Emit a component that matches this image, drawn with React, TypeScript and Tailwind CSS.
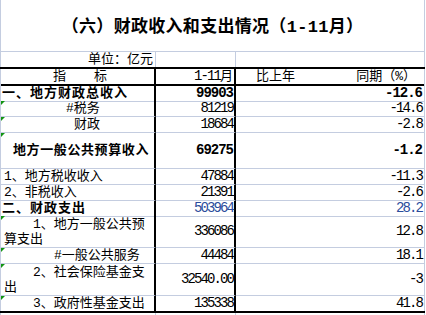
import React from "react";

type RowData = {
  h: string;
  label: React.ReactNode;
  labelCls: string;
  v1: string;
  v2: string;
  bold?: boolean;
  blue?: boolean;
  tri?: boolean;
  center?: boolean;
  wrap?: boolean;
  last?: boolean;
};

const LBL = "font-['Liberation_Mono','Noto_Sans_CJK_SC',monospace] text-[13px] leading-[15px] text-black whitespace-nowrap";
const NUM = "font-['Liberation_Mono','Noto_Sans_CJK_SC',monospace] text-[14px] leading-[15px] whitespace-nowrap";

const rows: RowData[] = [
  { h: "h-[15px]", label: "一、地方财政总收入", labelCls: "pl-[1px] font-bold tracking-[1px]", v1: "99903", v2: "-12.6", bold: true },
  { h: "h-[16px]", label: "#税务", labelCls: "pl-[65px]", v1: "81219", v2: "-14.6", tri: true },
  { h: "h-[16px]", label: "财政", labelCls: "pl-[73px]", v1: "18684", v2: "-2.8", tri: true },
  { h: "h-[36px]", label: "地方一般公共预算收入", labelCls: "pl-[12px] font-bold tracking-[0.6px]", v1: "69275", v2: "-1.2", bold: true, tri: true, center: true },
  { h: "h-[16px]", label: "1、地方税收收入", labelCls: "pl-[3px]", v1: "47884", v2: "-11.3" },
  { h: "h-[16px]", label: "2、非税收入", labelCls: "pl-[3px]", v1: "21391", v2: "-2.6" },
  { h: "h-[15px]", label: "二、财政支出", labelCls: "pl-[1px] font-bold tracking-[1px]", v1: "503964", v2: "28.2", blue: true },
  { h: "h-[32px]", label: "1、地方一般公共预算支出", labelCls: "pl-[3px] indent-[29px]", v1: "336086", v2: "12.8", tri: true, center: true, wrap: true },
  { h: "h-[16px]", label: "#一般公共服务", labelCls: "pl-[53px]", v1: "44484", v2: "18.1", tri: true },
  { h: "h-[32px]", label: "2、社会保险基金支出", labelCls: "pl-[3px] indent-[29px]", v1: "32540.00", v2: "-3", tri: true, center: true, wrap: true },
  { h: "h-[15px]", label: "3、政府性基金支出", labelCls: "pl-[32px]", v1: "135338", v2: "41.8", tri: true, last: true },
];

function Tri() {
  return (
    <span className="absolute left-0 top-0 w-0 h-0 border-t-[4px] border-r-[4px] border-t-[#129412] border-r-transparent" />
  );
}

function DataRow({ r }: { r: RowData }) {
  const bb = r.last ? "" : "border-b border-b-[#c4cde0]";
  const align = r.center ? "items-center" : "items-end";
  const numCls = r.bold
    ? "font-bold tracking-[-1px] text-black"
    : r.blue
    ? "tracking-[-1.9px] text-[#2b4c9c]"
    : "tracking-[-1.9px] text-black";
  return (
    <div className={`grid grid-cols-[155px_80px_188px] ${r.h} border-l border-r border-[#c4cde0]`}>
      <div className={`relative flex ${r.wrap ? "items-start pt-[1px]" : align} border-r-2 border-r-black ${bb} overflow-hidden`}>
        {r.tri && <Tri />}
        {r.wrap ? (
          <div className={`font-['Liberation_Mono','Noto_Sans_CJK_SC',monospace] text-[13px] leading-[15px] text-black w-full ${r.labelCls}`}>
            {r.label}
          </div>
        ) : (
          <div className={`${LBL} ${r.labelCls}`}>{r.label}</div>
        )}
      </div>
      <div className={`flex ${align} justify-end pr-[1px] border-r-2 border-r-black ${bb}`}>
        <span className={`${NUM} ${numCls}`}>{r.v1}</span>
      </div>
      <div className={`flex ${align} justify-end pr-[2px] ${bb}`}>
        <span className={`${NUM} ${numCls}`}>{r.v2}</span>
      </div>
    </div>
  );
}

export default function App() {
  return (
    <div className="w-[426px] h-[315px] bg-white overflow-hidden">
      <div className="w-[425px]">
        {/* title */}
        <div className="h-[52px] border-l border-r border-b border-[#c4cde0] flex items-center justify-center pt-[4px]">
          <span className="font-['Liberation_Mono','Noto_Sans_CJK_SC',monospace] text-[17px] font-bold text-black whitespace-nowrap tracking-[0.3px]">
            （六）财政收入和支出情况（1-11月）
          </span>
        </div>
        {/* unit row */}
        <div className="grid grid-cols-[155px_80px_188px] h-[15px] border-l border-r border-[#c4cde0]">
          <div className="flex items-end justify-end pr-[2px] border-r border-r-[#c4cde0]">
            <span className={LBL}>单位：亿元</span>
          </div>
          <div className="border-r border-r-[#c4cde0]" />
          <div />
        </div>
        {/* table */}
        <div className="border-t-2 border-b-2 border-black">
          <div className="grid grid-cols-[155px_80px_188px] h-[17px] border-l border-r border-[#c4cde0]">
            <div className="flex items-end pl-[52px] gap-[28px] border-r-2 border-r-black border-b-2 border-b-black">
              <span className={LBL}>指</span>
              <span className={LBL}>标</span>
            </div>
            <div className="flex items-end justify-end pr-[1px] border-r-2 border-r-black border-b-2 border-b-black">
              <span className={LBL}>
                <span className="text-[14px] tracking-[-1.9px]">1-11</span>月
              </span>
            </div>
            <div className="flex items-end justify-between pl-[20px] pr-[8px] border-b-2 border-b-black">
              <span className={LBL}>比上年</span>
              <span className={LBL}>同期（%）</span>
            </div>
          </div>
          {rows.map((r, i) => (
            <DataRow key={i} r={r} />
          ))}
        </div>
        {/* below */}
        <div className="grid grid-cols-[155px_80px_188px] h-[2px] border-l border-r border-[#c4cde0]">
          <div className="border-r border-r-[#c4cde0]" />
          <div className="border-r border-r-[#c4cde0]" />
          <div />
        </div>
      </div>
    </div>
  );
}
